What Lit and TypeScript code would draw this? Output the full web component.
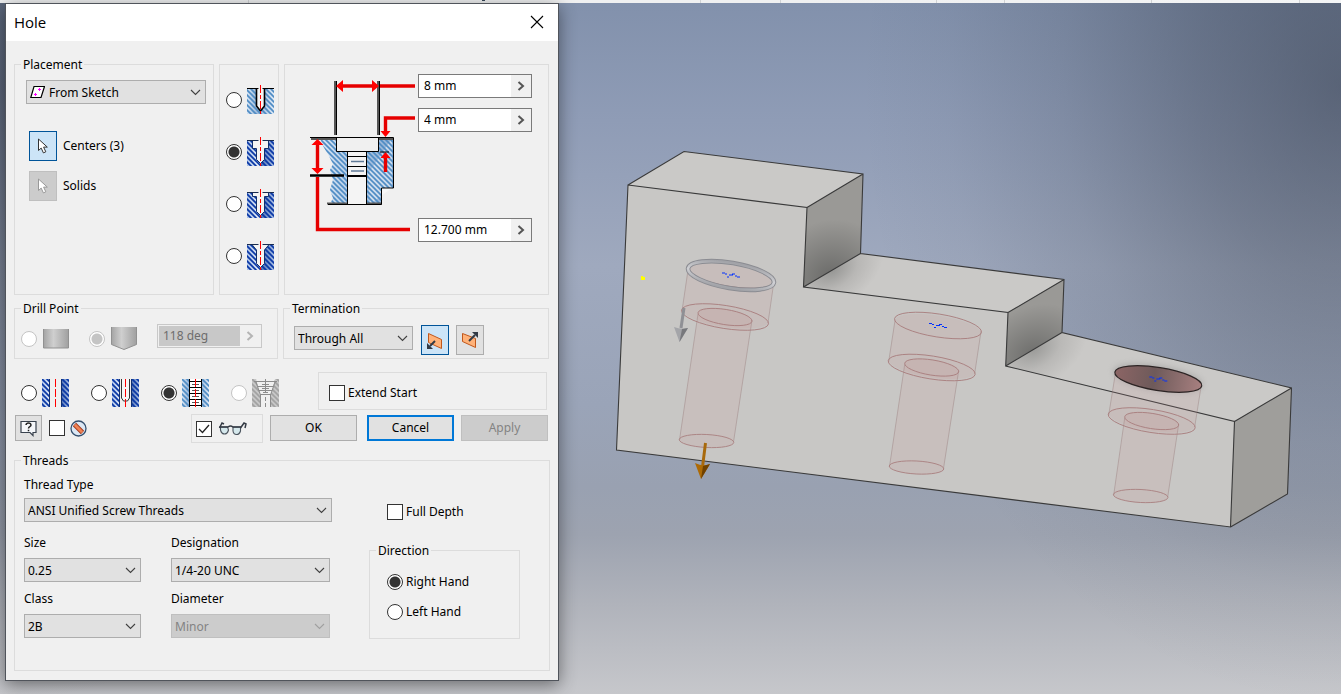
import { LitElement, html, svg, css, nothing } from "lit";
import { customElement } from "lit/decorators.js";

type Pt = [number, number];

const ell = (c: Pt, rx: number, ry: number, rot: number, cls: string) =>
  svg`<ellipse class=${cls} rx=${rx} ry=${ry} transform="translate(${c[0]} ${c[1]}) rotate(${rot})"></ellipse>`;

// Counterbored hole preview: wide bore from top to mid, narrow drill from mid to end.
const hole = (top: Pt, mid: Pt, end: Pt, open = false) => svg`
  <path class="bore" d="M${top[0] - 43} ${top[1] - 6} A44 11.5 9 0 1 ${top[0] + 43} ${top[1] + 6} L${mid[0] + 43} ${mid[1] + 6} A44 11.5 9 0 1 ${mid[0] - 43} ${mid[1] - 6}Z"></path>
  <path class="bore" d="M${mid[0] - 27} ${mid[1] - 3} A27 7.6 9 0 1 ${mid[0] + 27} ${mid[1] + 3} L${end[0] + 27} ${end[1] + 2} A27 6.5 3 0 1 ${end[0] - 27} ${end[1] - 2}Z"></path>
  <path class="side" d="M${top[0] - 43} ${top[1] - 5} L${mid[0] - 43} ${mid[1] - 6} M${top[0] + 43} ${top[1] + 6} L${mid[0] + 43} ${mid[1] + 6} M${mid[0] - 27} ${mid[1] - 3} L${end[0] - 27} ${end[1] - 1} M${mid[0] + 27} ${mid[1] + 3} L${end[0] + 27} ${end[1] + 1}"></path>
  ${ell(top, 44, 11.5, 9, open ? "mouth" : "rim")}
  ${ell(mid, 44, 11.5, 9, "rim")}
  ${ell(mid, 27.3, 7.6, 9, "rim")}
  ${ell(end, 27.3, 6.5, 3, "rim")}
  <path class="mark" d="M${top[0] - 9} ${top[1] - 2}h3M${top[0] - 6} ${top[1] - 1}h2M${top[0] - 2} ${top[1]}h4M${top[0] + 1} ${top[1] - 1}h3M${top[0] - 4} ${top[1] + 2}h2M${top[0] + 4} ${top[1] + 1}h2M${top[0] + 6} ${top[1] + 2}h3"></path>`;

const chevron = html`<svg class="chev" width="11" height="7" viewBox="0 0 11 7" aria-hidden="true">
  <path d="M1 1l4.5 4.5L10 1" fill="none" stroke="currentColor" stroke-width="1.1"></path></svg>`;

const cursor = html`<svg width="12" height="17" viewBox="0 0 12 17" aria-hidden="true">
  <path d="M1.5 1v11.5l2.7-2.4 2.2 4.8 2.4-1.1-2.2-4.7h3.7z" fill="#fff" stroke="currentColor"></path></svg>`;

// Pocket outlines of the four hole kinds, in a 27 x 29 box.
const kinds = [
  { name: "Drilled", d: "M9.5 3v18l4 5 4-5V3", blue: false, on: false },
  { name: "Counterbore", d: "M5.5 3v8.5h4v11l4 4 4-4v-11h4V3", blue: true, on: true },
  { name: "Spotface", d: "M5.5 3v4.500h4v15l4 4 4-4v-15h4V3", blue: true, on: false },
  { name: "Countersink", d: "M4.5 3l5 6v13.500l4 4 4-4V9l5-6", blue: true, on: false },
];

const kindIcon = (k: (typeof kinds)[number]) => html`
  <svg width="27" height="29" viewBox="0 0 27 29" aria-hidden="true">
    <rect y="3" width="13" height="26" fill=${k.blue ? "url(#blueL)" : "url(#skyL)"}></rect>
    <rect x="13" y="3" width="14" height="26" fill=${k.blue ? "url(#blueR)" : "url(#skyR)"}></rect>
    <rect y="3" width="27" height="26" fill=${k.blue ? "url(#hatchB)" : "url(#hatchS)"}></rect>
    <path d=${k.d} fill="#f4f4f4" stroke=${k.blue ? "#12306c" : "#000"} stroke-width=${k.blue ? 1 : 1.6}></path>
    <path d="M0 3.5h11.5M15.5 3.5H27" stroke=${k.blue ? "#1a2c50" : "#000"}></path>
    <path d="M13 0h1v8h-1zM13 10h1v4h-1zM13 16h1v8h-1zM13 26h1v3h-1z" fill="#f00"></path>
  </svg>`;

const styleIcon = (i: number) => {
  const base = ["blue", "blue", "sky", "grey"][i];
  const hatch = ["hatchB", "hatchB", "hatchS", "hatchG"][i];
  return html`<svg width="27" height="28" viewBox="0 0 27 28" aria-hidden="true">
    ${i === 3
      ? svg`<path d="M0 0h4l4 15v13H0zM23 0h4v28h-8V15z" fill="#c6c6c6"></path>
        <path d="M0 0h4l4 15v13H0zM23 0h4v28h-8V15z" fill="url(#hatchG)"></path>
        <path d="M2 2.500h23M3.500 2l5 14v12M23.500 2l-5 14v12M6 7.500h15M7 11.500h13M8 15.500h11M10 5.500h7M10 9.500h7M11 13.500h5M13.500 0v13M13.500 18v4M13.500 24v4" fill="none" stroke="#8c8c8c"></path>`
      : svg`<rect width="8" height="28" fill="url(#${base}L)"></rect><rect x="19" width="8" height="28" fill="url(#${base}R)"></rect>
        <path d="M0 0h8v28H0zM19 0h8v28h-8z" fill="url(#${hatch})"></path>
        <path d="M7.500 0v28M19.500 0v28" stroke=${i === 2 ? "#000" : "#123070"}></path>`}
    ${i === 1 ? svg`<path d="M9.500 0v19l2 3h4l2-3V0" fill="#f6f6f6" stroke="#333"></path>` : nothing}
    ${i === 2
      ? svg`<rect x="8" width="11" height="28" fill="#fff"></rect><path d="M8 2.500h11M8 8.500h11M8 14.500h11M8 20.500h11M8 26.500h11" stroke="#000"></path>
        <path d="M10 5.500h7M10 11.500h7M10 17.500h7M10 23.500h7" stroke="#555"></path>`
      : nothing}
    ${i === 3 ? nothing : svg`<path d="M13 0h1v8h-1zM13 10h1v8h-1zM13 20h1v8h-1z" fill="#f00"></path>`}
  </svg>`;
};

const planeIcon = (out: boolean) => html`<svg width="18" height="20" viewBox="0 0 18 20" aria-hidden="true">
  ${out
    ? svg`<path d="M1.500 3.500l13 5v9l-13-6z" fill="#ffb279" stroke="#c0571c"></path>
      <path d="M8 11l6-6" stroke="#333b46" stroke-width="2"></path><path d="M11 2h6v6z" fill="#333b46"></path>`
    : svg`<path d="M2.500 3.500l13 6v9l-13-6z" fill="#ffb279" stroke="#c0571c"></path>
      <path d="M9 11l-5 5" stroke="#333b46" stroke-width="2"></path><path d="M1 13v6h6z" fill="#333b46"></path>`}
</svg>`;

@customElement("app-root")
export class AppRoot extends LitElement {
  static styles = css`
    :host { display: block; font: 12px/16px "Noto Sans", sans-serif; color: #000; }
    * { box-sizing: border-box; }
    .page { position: relative; min-height: 100vh; display: flex; flex-direction: column; overflow: hidden; }
    .ribbon { height: 3px; background: linear-gradient(90deg, #eff0f1 60%, #f4f5f6); }
    .ribbon svg { display: block; }
    .scene { flex: 1; position: relative; min-height: 691px;
      background:
        radial-gradient(ellipse 480px 620px at 100% 12%, rgba(40,47,60,.5), rgba(40,47,60,.34) 30%, rgba(40,47,60,.15) 58%, rgba(40,47,60,.04) 82%, rgba(40,47,60,0)),
        radial-gradient(ellipse 480px 620px at 0% 12%, rgba(40,47,60,.5), rgba(40,47,60,.34) 30%, rgba(40,47,60,.15) 58%, rgba(40,47,60,.04) 82%, rgba(40,47,60,0)),
        linear-gradient(#8291ac, #8f9cb6 17%, #9fa9be 38%, #9aa4b8 58%, #99a1b1 70%, #9da3b0 77%, #b0b3bb 87%, #c6c7cb); }
    .model { position: absolute; left: 0; top: -3px; display: block; }
    .edge { fill: none; stroke: #3a3a3a; stroke-width: 1.1; }
    .bore { fill: rgba(203, 150, 150, .15); }
    .side { stroke: rgba(140, 110, 110, .35); fill: none; }
    .rim { fill: rgba(203, 150, 150, .05); stroke: #a98080; stroke-width: .9; }
    .mouth { fill: url(#mouth); stroke: #2c2424; stroke-width: 1.2; }
    .mark { stroke: #0030ff; fill: none; stroke-width: 1.2; }

    .dialog { position: absolute; left: 5px; top: 3px; width: 554px; border: 1px solid #50545b; background: #f0f0f0; box-shadow: 0 4px 16px rgba(0,0,0,.45); }
    .title { display: flex; align-items: center; justify-content: space-between; height: 37px; background: #fff; padding: 0 14px 2px 8px; }
    .title h1 { margin: 0; font: 15px/20px "Open Sans", sans-serif; }
    .title button { border: 0; background: none; padding: 0; height: 14px; }
    .title svg { display: block; }
    .body { padding: 15px 8px 9px; }
    fieldset { border: 1px solid #dcdcdc; margin: 0; padding: 0; min-width: 0; }
    legend { margin-left: 6px; padding: 1px 2px 0; height: 16px; }
    .plain { margin-top: 8px; }
    .top { display: grid; grid-template-columns: 200px 60px 1fr; column-gap: 5px; height: 239px; padding-right: 1px; }
    .second { display: grid; grid-template-columns: 264px 1fr; column-gap: 5px; margin-top: 5px; height: 59px; padding-right: 1px; }

    select, input, button { font: inherit; color: inherit; margin: 0; border-radius: 0; outline: 0; }
    .combo { display: grid; align-items: center; }
    .combo > * { grid-area: 1 / 1; }
    .combo select { appearance: none; width: 100%; height: 24px; border: 1px solid #adadad; background: #e1e1e1; padding: 1px 20px 0 3px; }
    .combo select:disabled { background: #ccc; border-color: #bfbfbf; color: #838383; opacity: 1; }
    .combo .chev { justify-self: end; margin-right: 5px; color: #404040; pointer-events: none; }
    .combo .off { color: #a0a0a0; }
    .combo .lead { margin-left: 4px; pointer-events: none; }
    .combo .indent { padding-left: 22px; }
    input[type="radio"] { appearance: none; flex: none; width: 16px; height: 16px; border: 1px solid #333; border-radius: 50%; background: #fff; }
    input[type="radio"]:checked { background: radial-gradient(circle, #333 5px, #fff 6px); }
    input[type="radio"]:disabled { border-color: #c4c4c4; }
    input[type="radio"]:disabled:checked { background: radial-gradient(circle, #c4c4c4 5px, #fff 6px); }
    input[type="checkbox"] { appearance: none; flex: none; width: 16px; height: 16px; border: 1px solid #333; background: #fff; }
    .tick { display: grid; place-items: center; }
    .tick > * { grid-area: 1 / 1; pointer-events: none; }
    label.opt { display: flex; align-items: center; gap: 3px; }
    label.pic { display: flex; align-items: center; gap: 5px; }
    label.pic svg { display: block; flex: none; }

    .place { display: flex; flex-direction: column; padding: 8px 7px 0 11px; }
    .picks { display: grid; grid-template-columns: 28px auto; gap: 10px 6px; align-items: center; padding: 27px 0 0 3px; }
    .tool { width: 28px; height: 30px; padding: 0; border: 1px solid #adadad; background: #e1e1e1; color: #333; display: grid; place-items: center; }
    .tool.on { background: #cce4f7; border-color: #005499; }
    .tool:disabled { background: #ccc; border-color: #bfbfbf; color: #999; }
    .kinds { display: flex; flex-direction: column; gap: 23px; padding: 20px 0 0 6px; }
    .sizes { display: flex; padding: 9px 16px 0 15px; }
    .sizes .diagram { display: block; flex: none; }
    .fields { flex: 1; min-width: 0; display: flex; flex-direction: column; gap: 10px; }
    .fields .depth { margin-top: 76px; }
    .value { display: flex; height: 24px; border: 1px solid #7a7a7a; background: #f0f0f0; }
    .value input { flex: 1; min-width: 0; border: 0; padding: 0 5px; background: #fff; }
    .value button { flex: none; width: 20px; border: 0; padding: 0; background: none; display: grid; place-items: center; color: #555; }
    .value.off { width: 105px; border-color: #c8c8c8; padding: 1px; margin: 0 0 6px 20px; }
    .value.off input { background: #c8c8c8; color: #6d6d6d; padding: 0 4px; }
    .value.off button { color: #b4b4b4; }

    .drill { display: flex; align-items: center; padding: 4px 0 0 6px; height: 42px; }
    .drill label { gap: 6px; }
    .drill label + label { margin-left: 20px; }
    .term { display: flex; align-items: center; height: 42px; padding: 5px 0 0 10px; }
    .term .combo { width: 119px; margin: 0 8px 3px 0; }
    .term .tool + .tool { margin-left: 7px; }
    .third { display: grid; grid-template-columns: 304px 1fr; align-items: center; margin-top: 13px; padding-right: 3px; height: 38px; }
    .styles { display: flex; gap: 22px; padding: 4px 0 0 7px; }
    .extend { height: 36px; display: flex; align-items: center; padding: 3px 0 0 10px; }
    .actions { display: flex; align-items: center; height: 30px; margin-top: 3px; padding: 0 2px 0 1px; }
    .help { width: 27px; height: 26px; border: 1px solid #adadad; background: #e1e1e1; padding: 0; display: grid; place-items: center; margin-right: 7px; }
    .peek { display: flex; align-items: center; width: 72px; height: 29px; border: 1px solid #dcdcdc; margin: 0 7px 0 auto; padding: 2px 0 0 4px; gap: 6px; }
    .peek svg, .actions label svg { display: block; }
    .cmd { width: 87px; height: 26px; border: 1px solid #adadad; background: #e1e1e1; padding: 0; margin-left: 0; }
    .cmd.focus { border: 2px solid #0078d7; margin: 0 7px 0 10px; }
    .cmd:disabled { background: #ccc; border-color: #bfbfbf; color: #838383; }

    .threads { margin-top: 9px; height: 219px; }
    .cols { display: flex; padding: 9px 0 0 9px; }
    .left { width: 308px; display: flex; flex-direction: column; }
    .left .type { margin-top: 5px; }
    .pairs { display: grid; grid-template-columns: 117px 159px; column-gap: 30px; margin-top: 13px; }
    .pairs .combo { margin: 7px 0 9px; }
    .right { width: 151px; margin-left: 37px; padding-top: 27px; }
    .right > .opt { padding-left: 18px; }
    .direction { margin-top: 22px; height: 97px; }
    .direction .list { display: flex; flex-direction: column; gap: 14px; padding: 16px 0 0 17px; }
  `;

  private combo(id: string, text: string, off = false) {
    return html`<select id=${id} ?disabled=${off}><option>${text}</option></select>
      <svg class="chev ${off ? "off" : ""}" width="11" height="7" viewBox="0 0 11 7" aria-hidden="true"><path d="M1 1l4.500 4.500L10 1" fill="none" stroke="currentColor" stroke-width="1.1"></path></svg>`;
  }

  private value(name: string, text: string, cls = "", off = false) {
    return html`<div class="value ${cls}">
      <input type="text" aria-label=${name} .value=${text} ?disabled=${off} />
      <button type="button" aria-label="${name} options" ?disabled=${off}><svg width="8" height="10" viewBox="0 0 8 10"><path d="M1.500 1L6 5 1.500 9" fill="none" stroke="currentColor" stroke-width="2"></path></svg></button>
    </div>`;
  }

  private scene() {
    return html`<svg class="model" width="1341" height="694" viewBox="0 0 1341 694" role="img" aria-label="Stepped block with three hole previews">
      <defs>
        <pattern id="hatchB" width="5" height="5" patternUnits="userSpaceOnUse"><path d="M-1 -1L6 6M-1 4L1 6M4 -1L6 1" stroke="#0a38a6" stroke-width="1.7"></path></pattern>
        <pattern id="hatchS" width="5" height="5" patternUnits="userSpaceOnUse"><path d="M-1 -1L6 6M-1 4L1 6M4 -1L6 1" stroke="#4f8cc4" stroke-width="1.6"></path></pattern>
        <pattern id="hatchG" width="5" height="5" patternUnits="userSpaceOnUse"><path d="M-1 -1L6 6M-1 4L1 6M4 -1L6 1" stroke="#a2a2a2" stroke-width="1.6"></path></pattern>
        <linearGradient id="blueL"><stop stop-color="#a9c0e6"></stop><stop offset="1" stop-color="#e4ecf8"></stop></linearGradient>
        <linearGradient id="blueR"><stop stop-color="#4a6cae"></stop><stop offset="1" stop-color="#a6bce2"></stop></linearGradient>
        <linearGradient id="skyL"><stop stop-color="#d4e3f3"></stop><stop offset="1" stop-color="#8dadd2"></stop></linearGradient>
        <linearGradient id="skyR"><stop stop-color="#9bb8da"></stop><stop offset="1" stop-color="#dfeaf6"></stop></linearGradient>
        <linearGradient id="steel"><stop stop-color="#a4a4a4"></stop><stop offset=".4" stop-color="#cfcfcf"></stop><stop offset="1" stop-color="#a0a0a0"></stop></linearGradient>
        <linearGradient id="mouth"><stop stop-color="#8c6565"></stop><stop offset=".45" stop-color="#6e5a5a"></stop><stop offset="1" stop-color="#a88080"></stop></linearGradient>
        <linearGradient id="ring" x2="0" y2="1"><stop stop-color="#a2a3a8"></stop><stop offset=".5" stop-color="#cfd0d4"></stop><stop offset="1" stop-color="#a2a3a8"></stop></linearGradient>
        <radialGradient id="wall1" gradientUnits="userSpaceOnUse" cx="0" cy="0" r="1" gradientTransform="translate(830 277) rotate(-31) scale(62 56)"><stop stop-color="#6b6b69"></stop><stop offset="1" stop-color="#9a9996"></stop></radialGradient>
        <radialGradient id="wall2" gradientUnits="userSpaceOnUse" cx="0" cy="0" r="1" gradientTransform="translate(1032 354) rotate(-31) scale(60 46)"><stop stop-color="#6f6f6d"></stop><stop offset="1" stop-color="#9a9996"></stop></radialGradient>
        <radialGradient id="floor1" gradientUnits="userSpaceOnUse" cx="0" cy="0" r="1" gradientTransform="translate(832 270) rotate(-31) scale(56 36)"><stop stop-color="#969694"></stop><stop offset=".5" stop-color="#b8b7b5"></stop><stop offset="1" stop-color="#cac9c7"></stop></radialGradient>
        <radialGradient id="floor2" gradientUnits="userSpaceOnUse" cx="0" cy="0" r="1" gradientTransform="translate(1034 349) rotate(-31) scale(58 38)"><stop stop-color="#9b9b99"></stop><stop offset=".5" stop-color="#bab9b7"></stop><stop offset="1" stop-color="#cac9c7"></stop></radialGradient>
        <filter id="soft" x="-20%" y="-40%" width="140%" height="180%"><feGaussianBlur stdDeviation="3"></feGaussianBlur></filter>
      </defs>
      <path fill="#c8c7c5" d="M628 185L807 207.500 803.500 287 1008 312.500 1005.700 366 1234.500 421.500 1230.500 527 616.500 450z"></path>
      <path fill="#cac9c7" d="M628 185L684 151.500 863 174 807 207.500z"></path>
      <path fill="url(#floor1)" d="M803.500 287L860.500 253.500 1064 279.500 1008 312.500z"></path>
      <path fill="url(#floor2)" d="M1005.700 366L1062 332.500 1291.500 388 1234.500 421.500z"></path>
      <path fill="url(#wall1)" d="M807 207.500L863 174 860.500 253.500 803.500 287z"></path>
      <path fill="url(#wall2)" d="M1008 312.500L1064 279.500 1062 332.500 1005.700 366z"></path>
      <path fill="#9f9e9b" d="M1234.500 421.500L1291.500 388 1287.500 494 1230.500 527z"></path>
      <ellipse rx="45" ry="12" transform="translate(1158 378) rotate(9)" fill="#777" opacity=".4" filter="url(#soft)"></ellipse>
      <path class="edge" d="M628 185L807 207.500 803.500 287 1008 312.500 1005.700 366 1234.500 421.500 1230.500 527 616.500 450zL684 151.500 863 174 860.500 253.500 1064 279.500 1062 332.500 1291.500 388 1287.500 494 1230.500 527M807 207.500L863 174M803.500 287L860.500 253.500M1008 312.500L1064 279.500M1005.700 366L1062 332.500M1234.500 421.500L1291.500 388"></path>
      ${hole([731, 275], [725, 317], [706.5, 441])}
      ${hole([938, 325.5], [931.7, 367.5], [916.5, 467.5])}
      ${hole([1158.3, 379], [1151.7, 421], [1140.7, 496], true)}
      <g fill="none" transform="translate(731 275.500) rotate(9.500)">
        <ellipse rx="43.500" ry="12.600" stroke="#8b8c92" stroke-width="4.600"></ellipse>
        <ellipse rx="43.500" ry="12.600" stroke="url(#ring)" stroke-width="2.600"></ellipse>
      </g>
      <path d="M684 308l-3 20" stroke="#8f9095" stroke-width="3"></path>
      <path d="M674 327q7 3 14 1l-8.500 14z" fill="#a4a5a9"></path><path d="M682 329l6-1-8.500 14z" fill="#77787c"></path>
      <path d="M705.500 443l-3 24" stroke="#a8690c" stroke-width="3"></path>
      <path d="M695 463q8 4 15 1l-9 15z" fill="#ad6a05"></path><path d="M703 466l7-2-9 15z" fill="#704100"></path>
      <path d="M641 276h2v1h2v3h-4z" fill="#ff0"></path>
    </svg>`;
  }

  private diagram() {
    return html`<svg class="diagram" width="118" height="168" viewBox="0 0 118 168" role="img" aria-label="Counterbore dimensions">
      <path d="M20 64h74v50H82v16H30l3-6-3-8 3-10-3-10 3-6-4-8-6-10z" fill="url(#skyL)"></path>
      <path d="M68 100l24-36v50l-22 16z" fill="#fff" opacity=".5"></path>
      <path d="M20 64h74v50H82v16H30l3-6-3-8 3-10-3-10 3-6-4-8-6-10z" fill="url(#hatchS)"></path>
      <path d="M36.500 64v13.500h42V64z" fill="#f0f0f0"></path>
      <path d="M47 77h20v53H47z" fill="#f4f4f4"></path>
      <path d="M11 65h25M27 129.500h20M67 129.500h15M79 65h14" stroke="#555" stroke-width="2"></path>
      <path d="M10 63.500h83.500v50.500H81.500v16.500H28M36.500 64v13.500H78.500V64M47.500 77v53M66.500 77v53M47 82.500h20M47 92.500h20" fill="none" stroke="#000"></path>
      <path d="M47 102h20" stroke="#000" stroke-width="2"></path>
      <path d="M51 87.500h13M51 97h13" stroke="#607a96" stroke-width="1.500"></path>
      <path d="M10 101.500h34" stroke="#000" stroke-width="2.500"></path>
      <path d="M35 7v54M78 7v54" stroke="#555" stroke-width="2"></path><path d="M36.500 7v54M79.500 7v54" stroke="#000"></path>
      <g stroke="#e60000" stroke-width="3.400" fill="none">
        <path d="M40 12h34M80 12h35M115 44H85.500v14M85.500 84v14M17.500 70v26M17.500 103v52.500H110"></path>
      </g>
      <g fill="#f00">
        <path d="M36 12l7-6v12zM79 12l-7-6v12zM85.500 63l-5-6h10zM85.500 78l-5 6h10zM17.500 65l-6 6h12zM17.500 100l-6-6h12z"></path>
      </g>
      <path d="M80 78h9" stroke="#000"></path>
    </svg>`;
  }

  render() {
    return html`<main class="page">
      <div class="ribbon"><svg width="1341" height="3" aria-hidden="true"><path d="M248.500 0v3M700.500 0v3M780.500 0v3M936.500 0v3M1004.500 0v3M1151.500 0v3M1299.500 0v3" stroke="#d0d2d4"></path><path d="M482 .5h3" stroke="#345"></path></svg></div>
      <div class="scene">${this.scene()}</div>
      <section class="dialog" role="dialog" aria-label="Hole">
        <header class="title"><h1>Hole</h1>
          <button type="button" aria-label="Close"><svg width="14" height="14" viewBox="0 0 14 14"><path d="M1 1l12 12M13 1L1 13" stroke="#000" stroke-width="1.100"></path></svg></button>
        </header>
        <div class="body">
          <div class="top">
            <fieldset><legend>Placement</legend>
              <div class="place">
                <div class="combo">
                  <select class="indent" aria-label="Placement"><option>From Sketch</option></select>
                  <svg class="lead" width="15" height="14" viewBox="0 0 15 14" aria-hidden="true"><path d="M4 1.500h10.500L11 12.500H.8z" fill="#fff" stroke="#000" stroke-width="1.200"></path><path d="M9.500 3v3M8 4.500h3M5.500 8v3M4 9.500h3" stroke="#f0f"></path></svg>
                  ${chevron}
                </div>
                <div class="picks">
                  <button type="button" class="tool on" aria-label="Select centers">${cursor}</button><span>Centers (3)</span>
                  <button type="button" class="tool" disabled aria-label="Select solids">${cursor}</button><span>Solids</span>
                </div>
              </div>
            </fieldset>
            <fieldset class="plain" aria-label="Hole type"><div class="kinds">
              ${kinds.map((k) => html`<label class="pic"><input type="radio" name="kind" aria-label=${k.name} ?checked=${k.on} />${kindIcon(k)}</label>`)}
            </div></fieldset>
            <fieldset class="plain" aria-label="Dimensions"><div class="sizes">
              ${this.diagram()}
              <div class="fields">
                ${this.value("Counterbore diameter", "8 mm")}
                ${this.value("Counterbore depth", "4 mm")}
                ${this.value("Thread depth", "12.700 mm", "depth")}
              </div>
            </div></fieldset>
          </div>

          <div class="second">
            <fieldset><legend>Drill Point</legend><div class="drill">
              <label class="pic"><input type="radio" name="drill" disabled aria-label="Flat" /><svg width="26" height="20" viewBox="0 0 26 20"><path d="M.5 0v19h25V0" fill="url(#steel)" stroke="#919191"></path></svg></label>
              <label class="pic"><input type="radio" name="drill" disabled checked aria-label="Angle" /><svg width="26" height="24" viewBox="0 0 26 24"><path d="M.5 0v17.500l12.500 5 12.500-5V0" fill="url(#steel)" stroke="#919191"></path></svg></label>
              ${this.value("Drill point angle", "118 deg", "off", true)}
            </div></fieldset>
            <fieldset><legend>Termination</legend><div class="term">
              <div class="combo"><select aria-label="Termination"><option>Through All</option></select>${chevron}</div>
              <button type="button" class="tool on" aria-label="Direction one">${planeIcon(false)}</button>
              <button type="button" class="tool" aria-label="Direction two">${planeIcon(true)}</button>
            </div></fieldset>
          </div>

          <div class="third">
            <div class="styles">
              ${["Simple", "Clearance", "Tapped", "Taper tapped"].map((n, i) => html`<label class="pic"><input type="radio" name="style" aria-label=${n} ?checked=${i === 2} ?disabled=${i === 3} />${styleIcon(i)}</label>`)}
            </div>
            <fieldset><div class="extend"><label class="opt"><input type="checkbox" />Extend Start</label></div></fieldset>
          </div>

          <div class="actions">
            <button type="button" class="help" aria-label="Help"><svg width="17" height="17" viewBox="0 0 17 17"><path d="M1 1.500h15v11h-3v3l-3-3H1z" fill="#f5f7fa" stroke="#39424e" stroke-width="1.200"></path><path d="M6 5q.3-2 2.500-2t2.500 2q0 1-1.200 1.700T8.500 8.500M8.500 9.800v1.500" fill="none" stroke="#222" stroke-width="1.500"></path></svg></button>
            <label class="pic"><input type="checkbox" aria-label="Suppress hole" /><svg width="17" height="17" viewBox="0 0 17 17"><circle cx="8.500" cy="8.500" r="7.500" fill="#dce8f5" stroke="#35506f" stroke-width="1.300"></circle><path d="M4.500 4.500l8 8" stroke="#a03417" stroke-width="4.600"></path><path d="M4.800 4.800l7.400 7.400" stroke="#f08254" stroke-width="3"></path></svg></label>
            <label class="peek"><span class="tick"><input type="checkbox" checked aria-label="Preview" /><svg width="12" height="10" viewBox="0 0 12 10"><path d="M1 5l3.500 3.500L11 1" fill="none" stroke="#222" stroke-width="1.300"></path></svg></span>
              <svg width="29" height="16" viewBox="0 0 29 16"><path d="M2.500 6h7l1 3q-1 4-4 4t-4-4zM15 6h7.500v4q-1 3.500-4 3.500T15 10z" fill="#d5e8ec" stroke="#4b545e" stroke-width="1.100"></path><path d="M1 6h9q2.500-2 5 0h8M1.500 7L4 2l2 1M22.500 7l3.500-5 2 1-1 4" fill="none" stroke="#333a44" stroke-width="1.500"></path></svg>
            </label>
            <button type="button" class="cmd">OK</button>
            <button type="button" class="cmd focus">Cancel</button>
            <button type="button" class="cmd" disabled>Apply</button>
          </div>

          <fieldset class="threads"><legend>Threads</legend><div class="cols">
            <div class="left">
              <label for="type">Thread Type</label>
              <div class="combo type">${this.combo("type", "ANSI Unified Screw Threads")}</div>
              <div class="pairs">
                <div><label for="size">Size</label><div class="combo">${this.combo("size", "0.25")}</div></div>
                <div><label for="desig">Designation</label><div class="combo">${this.combo("desig", "1/4-20 UNC")}</div></div>
                <div><label for="class">Class</label><div class="combo">${this.combo("class", "2B")}</div></div>
                <div><label for="diam">Diameter</label><div class="combo">${this.combo("diam", "Minor", true)}</div></div>
              </div>
            </div>
            <div class="right">
              <label class="opt"><input type="checkbox" />Full Depth</label>
              <fieldset class="direction"><legend>Direction</legend><div class="list">
                <label class="opt"><input type="radio" name="hand" checked />Right Hand</label>
                <label class="opt"><input type="radio" name="hand" />Left Hand</label>
              </div></fieldset>
            </div>
          </div></fieldset>
        </div>
      </section>
    </main>`;
  }
}
